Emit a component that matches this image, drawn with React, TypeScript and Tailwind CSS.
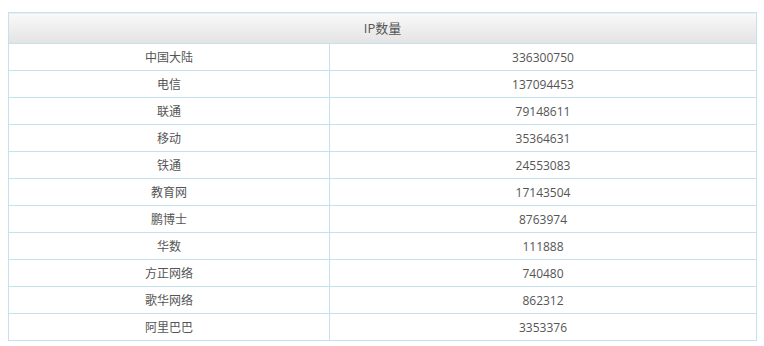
import React from "react";

const rows: [string, string][] = [
    ["中国大陆", "336300750"],
    ["电信", "137094453"],
    ["联通", "79148611"],
    ["移动", "35364631"],
    ["铁通", "24553083"],
    ["教育网", "17143504"],
    ["鹏博士", "8763974"],
    ["华数", "111888"],
    ["方正网络", "740480"],
    ["歌华网络", "862312"],
    ["阿里巴巴", "3353376"],
];

export default function App() {
    return (
        <div className="bg-white w-[764px] h-[346px] pt-[12px] pl-[8px] font-['Open_Sans','Noto_Sans_CJK_SC',sans-serif] text-[12px] text-[#555]">
            <table className="w-[749px] border-collapse border border-[#c3e1ee]">
                <thead>
                <tr>
                    <th colSpan={2} className="h-[31px] border border-[#c3e1ee] bg-gradient-to-b from-[#f9f9f9] to-[#e3e3e3] font-normal text-[13px] text-[#555] p-0 pt-[2px]">
                        IP数量
                    </th>
                </tr>
                </thead>
                <tbody>
                {rows.map(([name, count]) => (
                    <tr key={name} className="h-[27px]">
                        <td className="w-[321px] border border-[#c3e1ee] text-center p-0 pt-[2px]">{name}</td>
                        <td className="border border-[#c3e1ee] text-center p-0 pt-[2px]">{count}</td>
                    </tr>
                ))}
                </tbody>
            </table>
        </div>
    );
}
